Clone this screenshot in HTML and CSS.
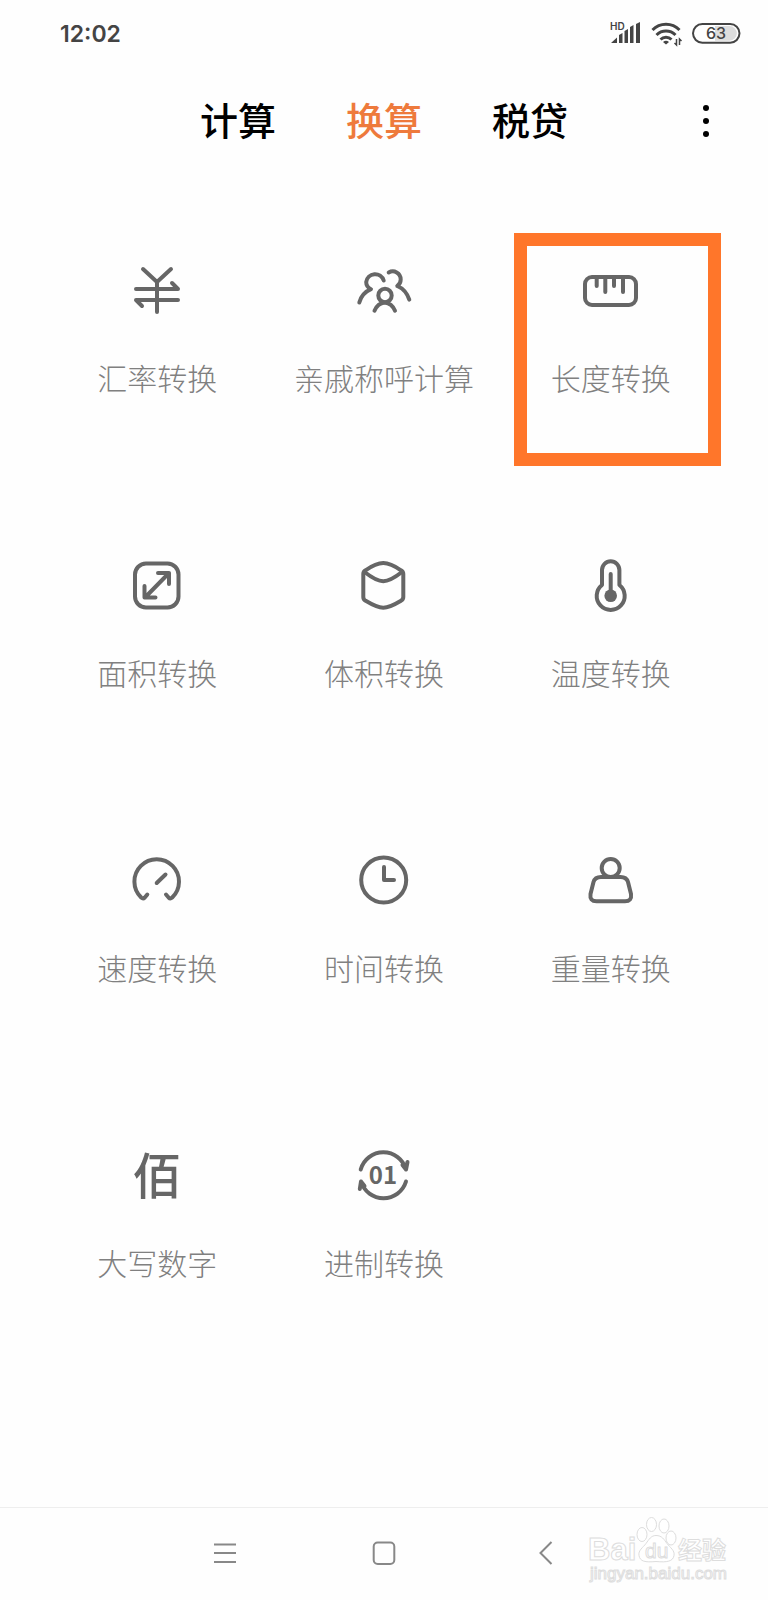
FILE: index.html
```html
<!DOCTYPE html>
<html lang="zh-CN">
<head>
<meta charset="utf-8">
<meta name="viewport" content="width=device-width, initial-scale=1">
<title>换算</title>
<link rel="stylesheet" href="styles.css">
</head>
<body>
<div class="app">
  <div class="status">
    <time class="clock">12:02</time>
    <svg class="status-icons" viewBox="0 2 132 28" aria-hidden="true">
      <text class="hd" x="1" y="12">HD</text>
      <path fill="#444" d="M2 25L8 19.500V25zM10 17l3.500-2v10H10zM15.500 13l3.500-2v14h-3.500zM21 9l3.500-2v18H21zM27 6l4-2v21h-4z"/>
      <g fill="none" stroke="#444" stroke-width="3">
        <path d="M43.500 12a19 19 0 0 1 27 0"/>
        <path d="M47.500 17a13.500 13.500 0 0 1 19 0"/>
        <path d="M51.500 21.500a8 8 0 0 1 11 0"/>
      </g>
      <path fill="#444" d="M54 24q3-2.500 6 0L57 26.500z"/>
      <path fill="none" stroke="#444" stroke-width="1.500" d="M67.500 21v6l-2-2M70.500 27v-6l2 2"/>
      <rect x="84" y="6" width="46.500" height="18.700" rx="9.350" fill="#fff" stroke="#444" stroke-width="2"/>
      <path fill="#ddd" d="M106 8h14.500a7.350 7.350 0 0 1 0 14.700H106z"/>
      <text class="level" x="97" y="21">63</text>
    </svg>
  </div>

  <header class="top">
    <nav class="tabs">
      <button class="tab" type="button">计算</button>
      <button class="tab tab-on" type="button" aria-current="page">换算</button>
      <button class="tab" type="button">税贷</button>
    </nav>
    <button class="more" type="button" aria-label="更多">
      <svg viewBox="0 0 40 40"><circle cx="20" cy="7" r="3"/><circle cx="20" cy="20" r="3"/><circle cx="20" cy="33" r="3"/></svg>
    </button>
  </header>

  <main class="grid">
    <button class="tile" type="button">
      <svg class="icon" viewBox="0 0 64 64"><path d="M18 11l14 13L46 11M32 24v30M11 31h42l-6-6M53 42H11l6 6"/></svg>
      <span>汇率转换</span>
    </button>
    <button class="tile" type="button">
      <svg class="icon" viewBox="0 0 64 64"><path d="M31.700 22.500A9 9 0 0 0 14.200 24c0 3.500 1.800 5.800 4.800 7.200C13.500 33.500 9 38.500 7.300 44.500M36.700 14.500C42 11.500 48.700 15 48.700 21.500c0 3-1.200 5-3.400 6.500 6 2.500 10 7.500 12 13.700"/><circle cx="33" cy="37.500" r="6.700"/><path d="M22.500 52.700C24.500 48 28 45 32.700 44.500 37.500 45 41 48 43 52.700"/></svg>
      <span>亲戚称呼计算</span>
    </button>
    <button class="tile tile-marked" type="button">
      <svg class="icon" viewBox="0 0 64 64"><rect x="6" y="19" width="51" height="28" rx="7"/><path d="M17.700 19v9M26.300 19v15M35 19v9M44 19v15"/></svg>
      <span>长度转换</span>
    </button>

    <button class="tile" type="button">
      <svg class="icon" viewBox="0 0 64 64"><rect x="10" y="10.500" width="43.500" height="44" rx="11"/><path d="M20 44.500L44 20M33 20h11v11M19.500 33v11.500h11"/></svg>
      <span>面积转换</span>
    </button>
    <button class="tile" type="button">
      <svg class="icon" viewBox="0 0 64 64"><path d="M11.300 21q0-2.500 2.200-3.700C19 13.500 25 10 31.300 10S43.500 13.500 49 17.300q2.300 1.200 2.300 3.700v23q0 2.500-2.300 3.700C43.500 51 37.500 54.700 31.300 54.700S19 51 13.500 47.700q-2.200-1.200-2.200-3.700z"/><path d="M12.500 19C19 24 25 28.300 31.300 28.300S43.500 24 50 19"/></svg>
      <span>体积转换</span>
    </button>
    <button class="tile" type="button">
      <svg class="icon" viewBox="0 0 64 64"><path d="M23 32V17a8.700 8.700 0 0 1 17.400 0v15a14 14 0 1 1-17.400 0zM31.700 21v20"/><circle class="solid" cx="31.700" cy="42.700" r="6.300"/></svg>
      <span>温度转换</span>
    </button>

    <button class="tile" type="button">
      <svg class="icon" viewBox="0 0 64 64"><path d="M22.300 46.500l-2.500 3q-1.700 1.700-3.600 0a22.300 22.300 0 1 1 31 0q-1.900 1.700-3.600 0L41 46.500M31.700 35l8.800-8.500"/></svg>
      <span>速度转换</span>
    </button>
    <button class="tile" type="button">
      <svg class="icon" viewBox="0 0 64 64"><circle cx="31.700" cy="32" r="22.500"/><path d="M32 19v13h10"/></svg>
      <span>时间转换</span>
    </button>
    <button class="tile" type="button">
      <svg class="icon" viewBox="0 0 64 64"><circle cx="31.700" cy="20" r="9"/><path d="M22 29h19.500q6 0 7.500 5l3 12q1 7.300-6 7.300H17.500q-7 0-6-7.300l3-12q1.500-5 7.500-5z"/></svg>
      <span>重量转换</span>
    </button>

    <button class="tile" type="button">
      <b class="glyph" aria-hidden="true">佰</b>
      <span>大写数字</span>
    </button>
    <button class="tile" type="button">
      <svg class="icon" viewBox="0 0 64 64"><path d="M8.700 26.500a23.500 23.500 0 0 1 45.300 0l1.500-7.500M54 26.500l-3.500-4.500M54 38.500a23.500 23.500 0 0 1-45 0L7.800 46M9 38.500l3.500 4.500"/><text x="31" y="41">01</text></svg>
      <span>进制转换</span>
    </button>
  </main>

  <footer class="navbar">
    <button class="key" type="button" aria-label="菜单"><svg viewBox="0 0 60 40"><path d="M20 11.500h22M20 20h22M20 29h22"/></svg></button>
    <button class="key" type="button" aria-label="主页"><svg viewBox="0 0 60 40"><rect x="19.700" y="9.500" width="20.600" height="21.500" rx="4"/></svg></button>
    <button class="key" type="button" aria-label="返回"><svg viewBox="0 0 60 40"><path d="M37.500 9L26.500 20l11 11"/></svg></button>
    <svg class="brand" viewBox="0 0 144 76" role="img" aria-label="Baidu 经验">
      <text class="brand-latin" x="0" y="48">Bai</text>
      <text class="brand-han" x="90" y="47">经验</text>
      <g>
        <ellipse cx="63.500" cy="12.500" rx="5" ry="7"/><ellipse cx="76" cy="14" rx="5" ry="7"/>
        <ellipse cx="54" cy="22.500" rx="5" ry="7"/><ellipse cx="83" cy="26" rx="5" ry="7"/>
        <path d="M68 23.500c6 0 8 4 11 8 3 4 8 7 7 12-1 6-7 7-18 6-11 1-16 0-17-6-1-5 4-8 7-12 3-4 5-8 10-8z"/>
      </g>
      <text class="brand-du" x="57" y="46">du</text>
      <text class="brand-url" x="2" y="67">jingyan.baidu.com</text>
    </svg>
  </footer>
</div>
</body>
</html>
```
FILE: styles.css
```css
* { box-sizing: border-box; }

body {
  margin: 0;
  background: #fefefe;
  font-family: "Noto Sans CJK SC", "Noto Sans", sans-serif;
}

button {
  margin: 0;
  padding: 0;
  border: 0;
  background: none;
  font: inherit;
  color: inherit;
}

svg { display: block; }

.app {
  display: flex;
  flex-direction: column;
  min-height: 100vh;
}

.status {
  display: flex;
  align-items: center;
  justify-content: space-between;
  height: 68px;
  padding: 0 27px 0 60px;
}

.clock {
  font: 600 23px/28px Inter, sans-serif;
  color: #444;
}

.status-icons { width: 132px; height: 28px; }
.hd { font: 600 10px Inter, sans-serif; fill: #444; }
.level { font: 500 16px Inter, sans-serif; fill: #444; }

.top {
  display: grid;
  grid-template-columns: 1fr auto 1fr;
  align-items: center;
  height: 106px;
  padding: 0 42px;
}

.tabs {
  display: flex;
  grid-column: 2;
  gap: 70px;
  padding-bottom: 4px;
}

.tab {
  font-size: 38px;
  font-weight: 500;
  line-height: 56px;
  color: #000;
}

.tab-on { color: #ee7a3c; }

.more { justify-self: end; }
.more svg { width: 40px; height: 40px; }

.grid {
  display: grid;
  flex: 1;
  grid-template-columns: repeat(3, 1fr);
  grid-auto-rows: 295px;
  padding: 59px 44px 0;
}

.tile {
  position: relative;
  display: flex;
  flex-direction: column;
  align-items: center;
  gap: 35px;
  padding-top: 25px;
  font-size: 30px;
  font-weight: 300;
  line-height: 40px;
  color: #808080;
  white-space: nowrap;
}

.tile-marked::after {
  content: "";
  position: absolute;
  inset: 0 3px 62px 17px;
  border: 13px solid #ff762a;
}

.icon {
  width: 64px;
  height: 64px;
  fill: none;
  stroke: #666;
  stroke-width: 4;
  stroke-linecap: round;
  stroke-linejoin: round;
}

.icon .solid { fill: #666; stroke: none; }

.icon text {
  font: 700 24px "Noto Sans CJK SC", sans-serif;
  text-anchor: middle;
  fill: #666;
  stroke: none;
}

.glyph {
  height: 64px;
  font-size: 49px;
  font-weight: 500;
  line-height: 60px;
  color: #666;
}

.navbar {
  position: relative;
  display: flex;
  justify-content: center;
  gap: 100px;
  height: 93px;
  padding-top: 25px;
  border-top: 1px solid #eee;
}

.key svg {
  width: 60px;
  height: 40px;
  fill: none;
  stroke: #888;
  stroke-width: 2;
}

.key { height: 40px; }

.brand {
  position: absolute;
  top: 4px;
  right: 36px;
  width: 144px;
  height: 76px;
  fill: #fff;
  stroke: #ddd;
  stroke-width: 1;
}

.brand text { font-family: "Liberation Sans", "Noto Sans CJK SC", sans-serif; }
.brand-latin { font-size: 31px; font-weight: 700; }
.brand-han { font-size: 24px; font-weight: 700; }
.brand-du { font-size: 21px; }
.brand-url { font-size: 17px; }
```
